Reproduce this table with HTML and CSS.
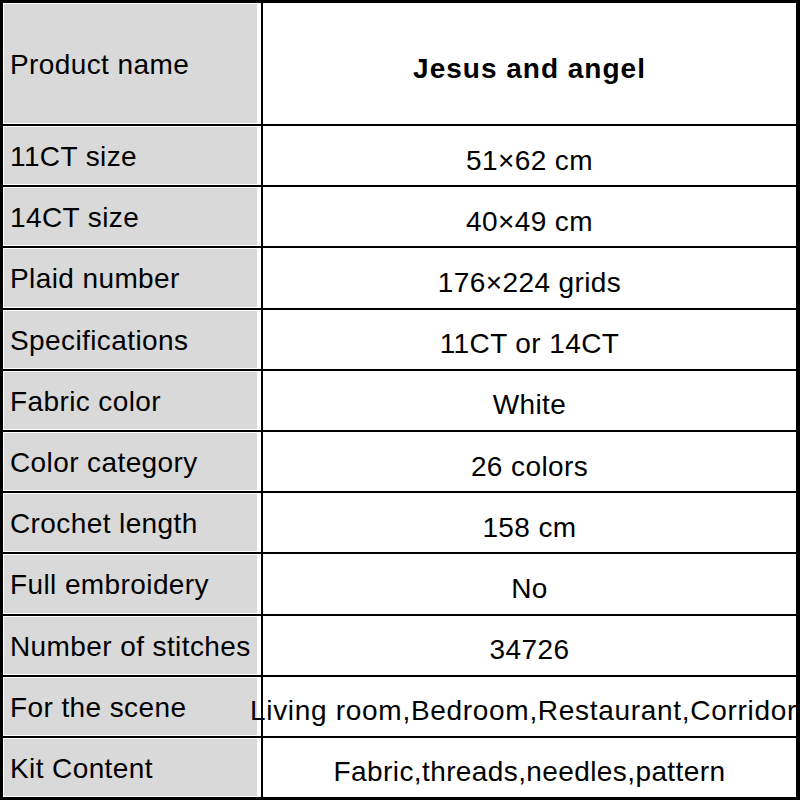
FILE: index.html
```html
<!DOCTYPE html>
<html lang="en">
<head>
<meta charset="utf-8">
<title>Jesus and angel</title>
<link rel="stylesheet" href="styles.css">
</head>
<body>
<div class="sheet">
  <div class="row head">
    <div class="label">Product name</div>
    <div class="value"><span class="title">Jesus and angel</span></div>
  </div>
  <div class="row">
    <div class="label">11CT size</div>
    <div class="value">51×62 cm</div>
  </div>
  <div class="row">
    <div class="label">14CT size</div>
    <div class="value">40×49 cm</div>
  </div>
  <div class="row">
    <div class="label">Plaid number</div>
    <div class="value">176×224 grids</div>
  </div>
  <div class="row">
    <div class="label">Specifications</div>
    <div class="value">11CT or 14CT</div>
  </div>
  <div class="row">
    <div class="label">Fabric color</div>
    <div class="value">White</div>
  </div>
  <div class="row">
    <div class="label">Color category</div>
    <div class="value">26 colors</div>
  </div>
  <div class="row">
    <div class="label">Crochet length</div>
    <div class="value">158 cm</div>
  </div>
  <div class="row">
    <div class="label">Full embroidery</div>
    <div class="value">No</div>
  </div>
  <div class="row">
    <div class="label">Number of stitches</div>
    <div class="value">34726</div>
  </div>
  <div class="row">
    <div class="label">For the scene</div>
    <div class="value wide">Living room,Bedroom,Restaurant,Corridor</div>
  </div>
  <div class="row">
    <div class="label">Kit Content</div>
    <div class="value">Fabric,threads,needles,pattern</div>
  </div>
</div>
</body>
</html>
```

FILE: styles.css
```css
html, body {
  margin: 0;
  padding: 0;
  background: #fff;
}

.sheet {
  width: 800px;
  height: 800px;
  box-sizing: border-box;
  border-style: solid;
  border-color: #000;
  border-width: 3px 4px 3px 3px;
  display: flex;
  flex-direction: column;
  font-family: "Liberation Sans", Arial, sans-serif;
  font-size: 28px;
  letter-spacing: 0.4px;
  color: #000;
  background: #fff;
}

.row {
  display: grid;
  grid-template-columns: 258px 1fr;
  flex: 1 1 0;
  min-height: 0;
}

.row.head {
  flex: 0 0 121px;
}

.row + .row {
  border-top: 2px solid #000;
}

.label {
  margin: 1px 4px 1px 1px;
  background: #d9d9d9;
  display: flex;
  align-items: center;
  padding-left: 6px;
  padding-top: 3px;
  white-space: nowrap;
}

.value {
  border-left: 2px solid #000;
  display: flex;
  align-items: center;
  justify-content: center;
  padding-top: 10px;
  white-space: nowrap;
  min-width: 0;
}

.value.wide {
  padding-right: 12px;
  letter-spacing: 0.7px;
}

.title {
  font-weight: bold;
  font-size: 28px;
  letter-spacing: 1px;
}
```
